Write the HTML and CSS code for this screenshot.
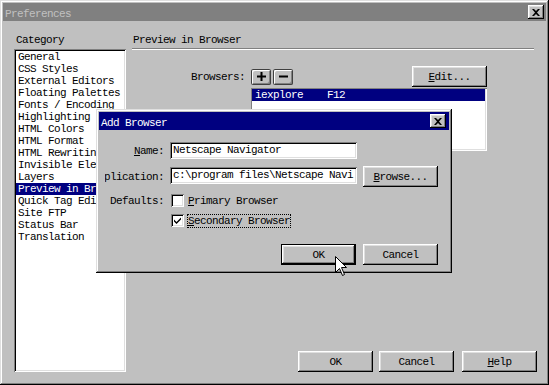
FILE: index.html
```html
<!DOCTYPE html>
<html lang="en">
<head>
  <meta charset="UTF-8" />
  <title>Preferences</title>
  <link rel="stylesheet" href="styles.css">
</head>
<body>

  <div class="window">
    <div class="titlebar inactive">
      <span class="title">Preferences</span>
      <span class="tb-close">
        <svg width="8" height="7" viewBox="0 0 8 7"><path d="M0 0H2L4 2L6 0H8L5 3.5L8 7H6L4 5L2 7H0L3 3.5Z" fill="#000"/></svg>
      </span>
    </div>

    <div class="content">
      <div class="cat-col">
        <div class="caption">Category</div>
        <ul class="cat-list">
          <li>General</li>
          <li>CSS Styles</li>
          <li>External Editors</li>
          <li>Floating Palettes</li>
          <li>Fonts / Encoding</li>
          <li>Highlighting</li>
          <li>HTML Colors</li>
          <li>HTML Format</li>
          <li>HTML Rewriting</li>
          <li>Invisible Elements</li>
          <li>Layers</li>
          <li class="sel">Preview in Browser</li>
          <li>Quick Tag Editor</li>
          <li>Site FTP</li>
          <li>Status Bar</li>
          <li>Translation</li>
        </ul>
      </div>

      <div class="panel">
        <div class="caption">Preview in Browser</div>
        <div class="rule"></div>

        <div class="browsers">
          <span class="lbl">Browsers:</span>
          <div class="tools">
            <button class="tool">
              <svg width="9" height="9" viewBox="0 0 9 9"><path d="M3.5 0H5.5V3.5H9V5.5H5.5V9H3.5V5.5H0V3.5H3.5Z" fill="#000"/></svg>
            </button>
            <button class="tool">
              <svg width="9" height="9" viewBox="0 0 9 9"><path d="M0 3.5H9V5.5H0Z" fill="#000"/></svg>
            </button>
            <button class="btn edit"><u>E</u>dit...</button>
          </div>
          <ul class="blist">
            <li class="sel">iexplore    F12</li>
          </ul>
        </div>

        <div class="footer">
          <button class="btn">OK</button>
          <button class="btn">Cancel</button>
          <button class="btn"><u>H</u>elp</button>
        </div>
      </div>
    </div>

    <div class="dialog">
      <div class="titlebar active">
        <span class="title">Add Browser</span>
        <span class="tb-close">
          <svg width="8" height="7" viewBox="0 0 8 7"><path d="M0 0H2L4 2L6 0H8L5 3.5L8 7H6L4 5L2 7H0L3 3.5Z" fill="#000"/></svg>
        </span>
      </div>
      <div class="dlg-body">
        <div class="form">
          <div class="flabel"><span><u>N</u>ame:</span></div>
          <div class="field">Netscape Navigator</div>
          <div></div>

          <div class="flabel"><span><u>A</u>pplication:</span></div>
          <div class="field app">c:\program files\Netscape Navi</div>
          <button class="btn"><u>B</u>rowse...</button>

          <div class="flabel"><span>Defaults:</span></div>
          <div class="opt">
            <span class="check"></span>
            <span class="opt-text"><u>P</u>rimary Browser</span>
          </div>

          <div></div>
          <div class="opt">
            <span class="check">
              <svg width="9" height="9" viewBox="0 0 9 9"><path d="M1 3.5L3.5 6L8 1.5V3.5L3.5 8L1 5.5Z" fill="#000"/></svg>
            </span>
            <span class="opt-text focus"><u>S</u>econdary Browser</span>
          </div>
        </div>

        <div class="dlg-buttons">
          <button class="btn default">OK</button>
          <button class="btn">Cancel</button>
        </div>
      </div>
    </div>

    <svg class="cursor" width="13" height="21" viewBox="0 0 13 21">
      <path d="M0.5 0.5V16.5L4.5 12.5L7.5 19.5L9.5 18.5L6.5 11.5H11.5Z" fill="#fff" stroke="#000" stroke-width="1"/>
    </svg>
  </div>

</body>
</html>
```

FILE: styles.css
```css
body {
  margin: 0;
  font-family: "Liberation Mono", monospace;
  font-size: 11px;
  letter-spacing: -0.6px;
  line-height: 12px;
  color: #000;
  background: #c0c0c0;
}
ul {
  margin: 0;
  padding: 0;
  list-style: none;
}
button {
  font: inherit;
  letter-spacing: inherit;
  color: #000;
  border: 0;
  padding: 0;
  background: #c0c0c0;
}
.window {
  position: relative;
  width: 549px;
  height: 385px;
  box-sizing: border-box;
  padding: 3px;
  display: flex;
  flex-direction: column;
  background: #c0c0c0;
  box-shadow: inset -1px -1px #000, inset 1px 1px #dfdfdf, inset -2px -2px #808080, inset 2px 2px #fff;
}
.titlebar {
  height: 18px;
  flex-shrink: 0;
  display: flex;
  align-items: center;
  justify-content: space-between;
  padding: 0 2px;
  white-space: pre;
}
.titlebar .title {
  padding-top: 3px;
}
.inactive {
  background: #808080;
  color: #c0c0c0;
}
.active {
  background: #000080;
  color: #fff;
  padding-right: 3px;
}
.tb-close {
  width: 16px;
  height: 14px;
  display: flex;
  align-items: center;
  justify-content: center;
  background: #c0c0c0;
  box-shadow: inset -1px -1px #000, inset 1px 1px #fff, inset -2px -2px #808080, inset 2px 2px #dfdfdf;
}
.content {
  flex: 1;
  display: flex;
  padding: 13px 9px 10px 11px;
}
.cat-col {
  width: 112px;
  display: flex;
  flex-direction: column;
}
.caption {
  height: 12px;
  white-space: pre;
}
.cat-col .caption {
  padding-left: 2px;
  margin-bottom: 3px;
}
.cat-list {
  flex: 1;
  padding: 2px;
  background: #fff;
  overflow: hidden;
  box-shadow: inset 1px 1px #808080, inset -1px -1px #fff, inset 2px 2px #000, inset -2px -2px #dfdfdf;
}
.cat-list li {
  height: 12px;
  padding-left: 2px;
  white-space: pre;
  overflow: hidden;
}
.sel {
  background: #000080;
  color: #fff;
}
.panel {
  flex: 1;
  margin-left: 6px;
  display: flex;
  flex-direction: column;
}
.panel .caption {
  padding-left: 1px;
  margin-bottom: 2px;
}
.rule {
  border-top: 1px solid #808080;
  border-bottom: 1px solid #fff;
  margin-right: 3px;
}
.browsers {
  display: grid;
  grid-template-columns: 119px 236px;
  grid-template-rows: 21px 63px;
  row-gap: 1px;
  margin-top: 16px;
}
.lbl {
  align-self: center;
  text-align: right;
  padding-right: 6px;
}
.tools {
  display: flex;
  align-items: center;
}
.tool {
  width: 20px;
  height: 16px;
  margin-right: 2px;
  display: flex;
  align-items: center;
  justify-content: center;
  border-radius: 2px;
  box-shadow: inset 0 0 0 1px #404040, inset 2px 2px #fff, inset -2px -2px #808080;
}
.btn {
  width: 75px;
  height: 21px;
  box-sizing: border-box;
  white-space: pre;
  box-shadow: inset -1px -1px #000, inset 1px 1px #fff, inset -2px -2px #808080, inset 2px 2px #dfdfdf;
}
.btn.edit {
  margin-left: auto;
}
.btn.default {
  box-shadow: inset 0 0 0 1px #000, inset -2px -2px #000, inset 2px 2px #fff, inset -3px -3px #808080, inset 3px 3px #dfdfdf;
}
.blist {
  grid-column: 2;
  padding: 1px 2px 2px 1px;
  background: #fff;
  box-shadow: inset 1px 1px #808080, inset -1px -1px #fff, inset -2px -2px #dfdfdf;
}
.blist li {
  height: 12px;
  padding-left: 3px;
  white-space: pre;
}
.footer {
  margin-top: auto;
  display: flex;
  justify-content: flex-end;
}
.footer .btn + .btn {
  margin-left: 6px;
}
.footer .btn:last-child {
  margin-left: 8px;
}

/* Add Browser dialog on top of the preferences */
.dialog {
  position: absolute;
  left: 96px;
  top: 109px;
  width: 356px;
  height: 164px;
  box-sizing: border-box;
  padding: 3px;
  background: #c0c0c0;
  box-shadow: inset -1px -1px #000, inset 1px 1px #dfdfdf, inset -2px -2px #808080, inset 2px 2px #fff;
}
.dlg-body {
  padding: 12px 11px 0 6px;
}
.form {
  display: grid;
  grid-template-columns: 59px 187px 75px;
  grid-template-rows: 17px 21px 13px 13px;
  column-gap: 6px;
  row-gap: 7px;
}
.flabel {
  display: flex;
  justify-content: flex-end;
  align-items: center;
  overflow: hidden;
  white-space: pre;
}
.flabel span {
  flex-shrink: 0;
}
.field {
  width: 187px;
  height: 17px;
  min-width: 0;
  box-sizing: border-box;
  padding: 2px 2px 0 3px;
  background: #fff;
  white-space: pre;
  overflow: clip;
  overflow-clip-margin: content-box;
  box-shadow: inset 1px 1px #808080, inset -1px -1px #fff, inset 2px 2px #000, inset -2px -2px #dfdfdf;
}
.field.app {
  margin-top: 1px;
}
.opt {
  grid-column: 2 / 4;
  display: flex;
  align-items: center;
}
.check {
  width: 13px;
  height: 13px;
  margin-left: 1px;
  margin-right: 3px;
  display: flex;
  align-items: center;
  justify-content: center;
  background: #fff;
  box-shadow: inset 1px 1px #808080, inset -1px -1px #fff, inset 2px 2px #000, inset -2px -2px #dfdfdf;
}
.opt-text {
  border: 1px solid transparent;
  white-space: pre;
}
.opt-text.focus {
  border: 1px dotted #000;
}
.dlg-buttons {
  display: flex;
  justify-content: flex-end;
  gap: 7px;
  margin-top: 17px;
}
.cursor {
  position: absolute;
  left: 335px;
  top: 256px;
}
```
